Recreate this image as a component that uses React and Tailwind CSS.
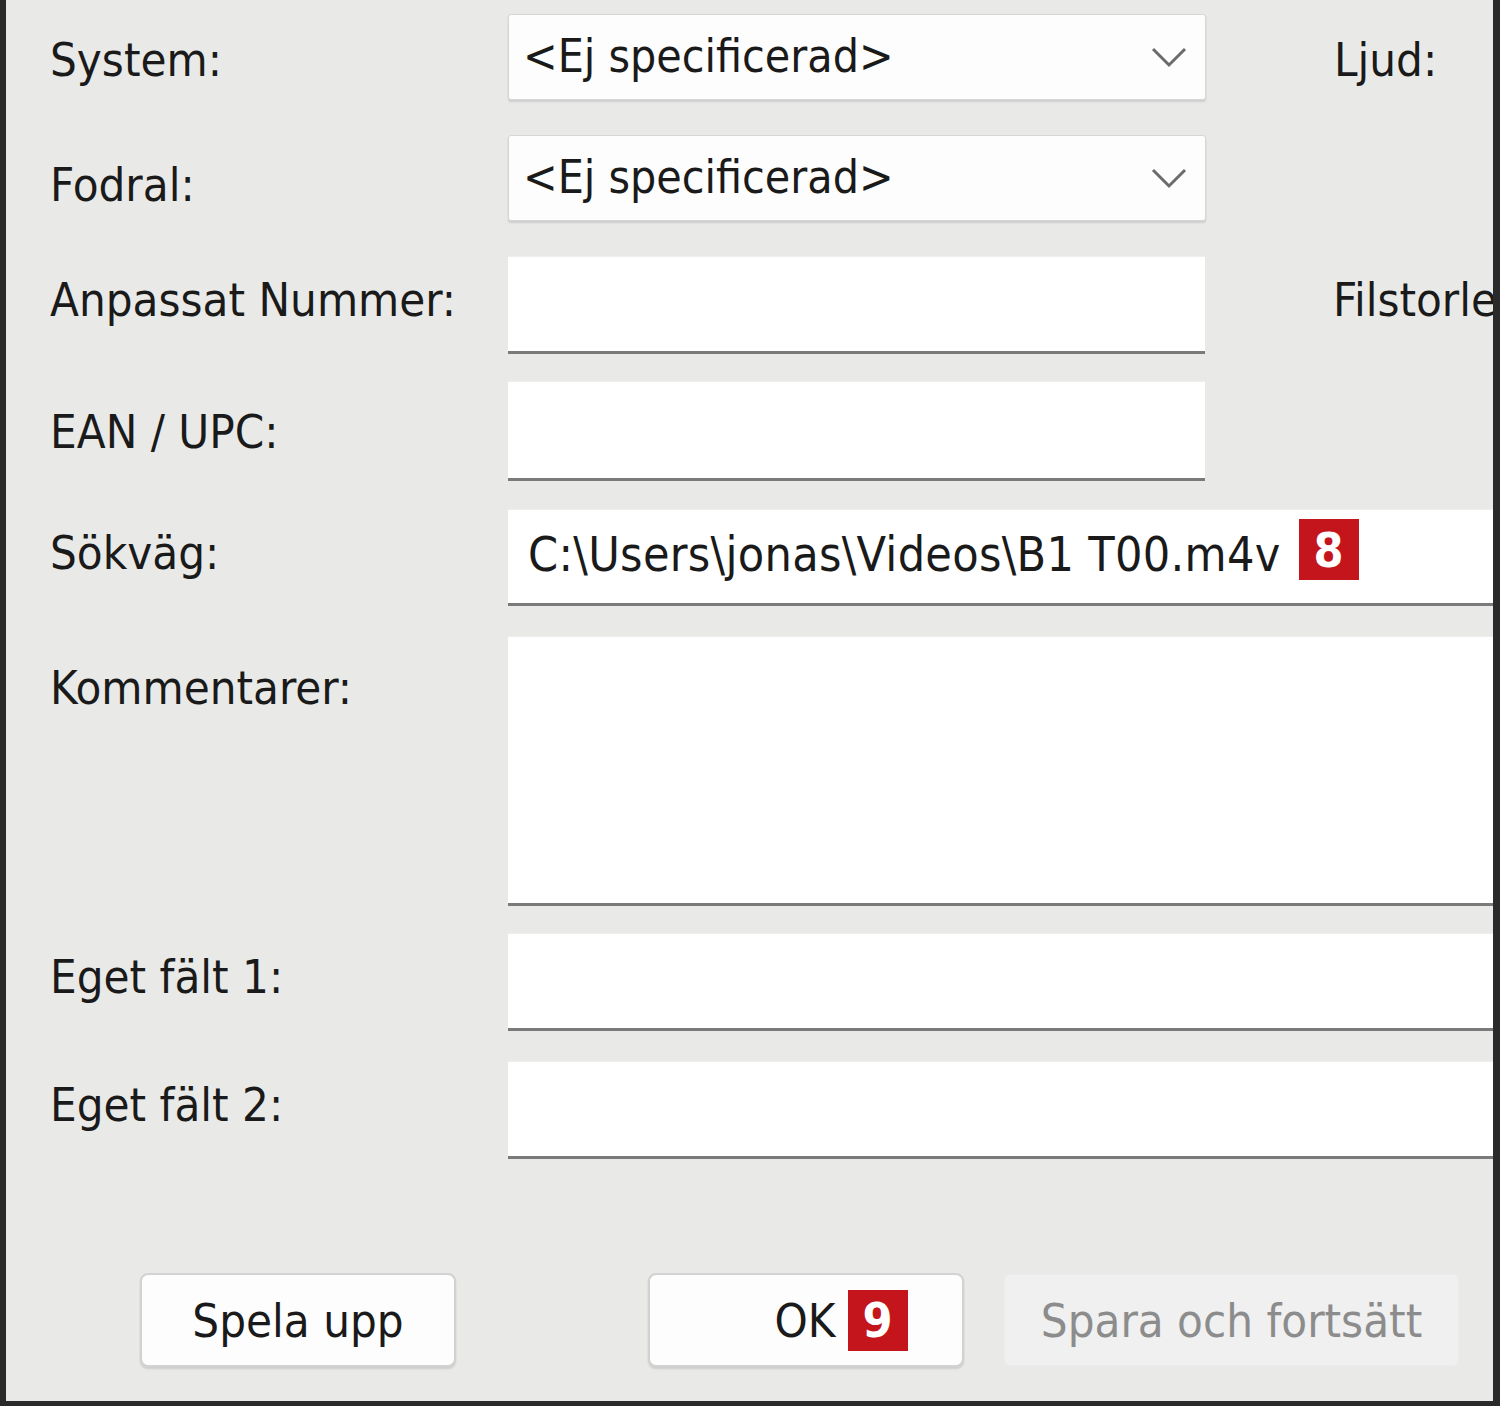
const font = { fontFamily: '"DejaVu Sans Condensed", "DejaVu Sans", sans-serif' };

function Label({ children, className = "" }) {
  return (
    <div className={`-ml-[6px] w-[458px] shrink-0 pl-[50px] text-[47px] leading-none text-[#1a1a1a] ${className}`}>{children}</div>
  );
}

function Select({ value }) {
  return (
    <div className="ml-[50px] flex h-[86px] w-[698px] shrink-0 items-center justify-between rounded-[3px] border border-[#d6d6d6] bg-[#fdfdfd] pl-[14px] pr-[18px] shadow-[0_2px_2px_rgba(0,0,0,0.12)]">
      <span className="pb-[2px] text-[46px] leading-none text-[#1a1a1a]">{value}</span>
      <svg width="36" height="22" viewBox="0 0 36 22" fill="none">
        <path d="M2 3 L18 19 L34 3" stroke="#6b6b6b" strokeWidth="3" />
      </svg>
    </div>
  );
}

function TextBox({ className = "", children }) {
  return (
    <div className={`ml-[50px] flex items-center border-t border-t-[#eeeeee] border-b-[3px] border-b-[#7a7a7a] bg-white ${className}`}>
      {children}
    </div>
  );
}

function Badge({ n, className = "" }) {
  return (
    <span className={`inline-flex h-[61px] w-[60px] items-center justify-center bg-[#c4141c] text-[48px] font-bold leading-none text-white ${className}`}>
      {n}
    </span>
  );
}

export default function App() {
  return (
    <div style={font} className="relative h-[1406px] w-[1500px] overflow-hidden border-b-[5px] border-l-[6px] border-r-[7px] border-[#2a2a2a] bg-[#e9eae8]">
      <div className="flex flex-col">
        <div className="mt-[14px] flex items-center">
          <Label className="pt-[4px]">System:</Label>
          <Select value="<Ej specificerad>" />
          <div className="ml-[128px] pt-[4px] text-[47px] leading-none text-[#1a1a1a]">Ljud:</div>
        </div>

        <div className="mt-[35px] flex items-center">
          <Label className="pt-[12px]">Fodral:</Label>
          <Select value="<Ej specificerad>" />
        </div>

        <div className="mt-[35px] flex items-center">
          <Label className="pb-[12px]">Anpassat Nummer:</Label>
          <TextBox className="h-[98px] w-[697px] shrink-0" />
          <div className="ml-[128px] whitespace-nowrap pb-[12px] text-[47px] leading-none text-[#1a1a1a]">Filstorlek:</div>
        </div>

        <div className="mt-[27px] flex items-center">
          <Label>EAN / UPC:</Label>
          <TextBox className="h-[100px] w-[697px] shrink-0" />
        </div>

        <div className="mt-[28px] flex items-center">
          <Label className="pb-[10px]">Sökväg:</Label>
          <TextBox className="h-[97px] flex-1 pl-[20px]">
            <span className="pb-[6px] text-[48px] leading-none tracking-[0.3px] text-[#1a1a1a]">C:\Users\jonas\Videos\B1 T00.m4v</span>
            <Badge n="8" className="ml-[18px] mb-[14px]" />
          </TextBox>
        </div>

        <div className="mt-[30px] flex items-start">
          <Label className="pt-[28px]">Kommentarer:</Label>
          <TextBox className="h-[270px] flex-1" />
        </div>

        <div className="mt-[27px] flex items-center">
          <Label className="pb-[12px]">Eget fält 1:</Label>
          <TextBox className="h-[98px] flex-1" />
        </div>

        <div className="mt-[30px] flex items-center">
          <Label className="pb-[12px]">Eget fält 2:</Label>
          <TextBox className="h-[98px] flex-1" />
        </div>

        <div className="mt-[114px] flex items-center">
          <button className="ml-[134px] flex h-[94px] w-[316px] items-center justify-center rounded-[8px] border-2 border-[#d2d2d2] bg-[#fdfdfd] text-[47px] leading-none text-[#1a1a1a] shadow-[0_2px_2px_rgba(0,0,0,0.12)]">
            Spela upp
          </button>
          <button className="ml-[192px] flex h-[94px] w-[316px] items-center justify-center rounded-[8px] border-2 border-[#d2d2d2] bg-[#fdfdfd] pl-[70px] text-[47px] leading-none text-[#1a1a1a] shadow-[0_2px_2px_rgba(0,0,0,0.12)]">
            OK
            <Badge n="9" className="ml-[12px] h-[60px]" />
          </button>
          <button className="ml-[40px] flex h-[92px] w-[455px] items-center justify-center rounded-[6px] border border-[#ececec] bg-[#f0f0f0] text-[47px] leading-none text-[#8c8c8c]">
            Spara och fortsätt
          </button>
        </div>
      </div>
    </div>
  );
}
